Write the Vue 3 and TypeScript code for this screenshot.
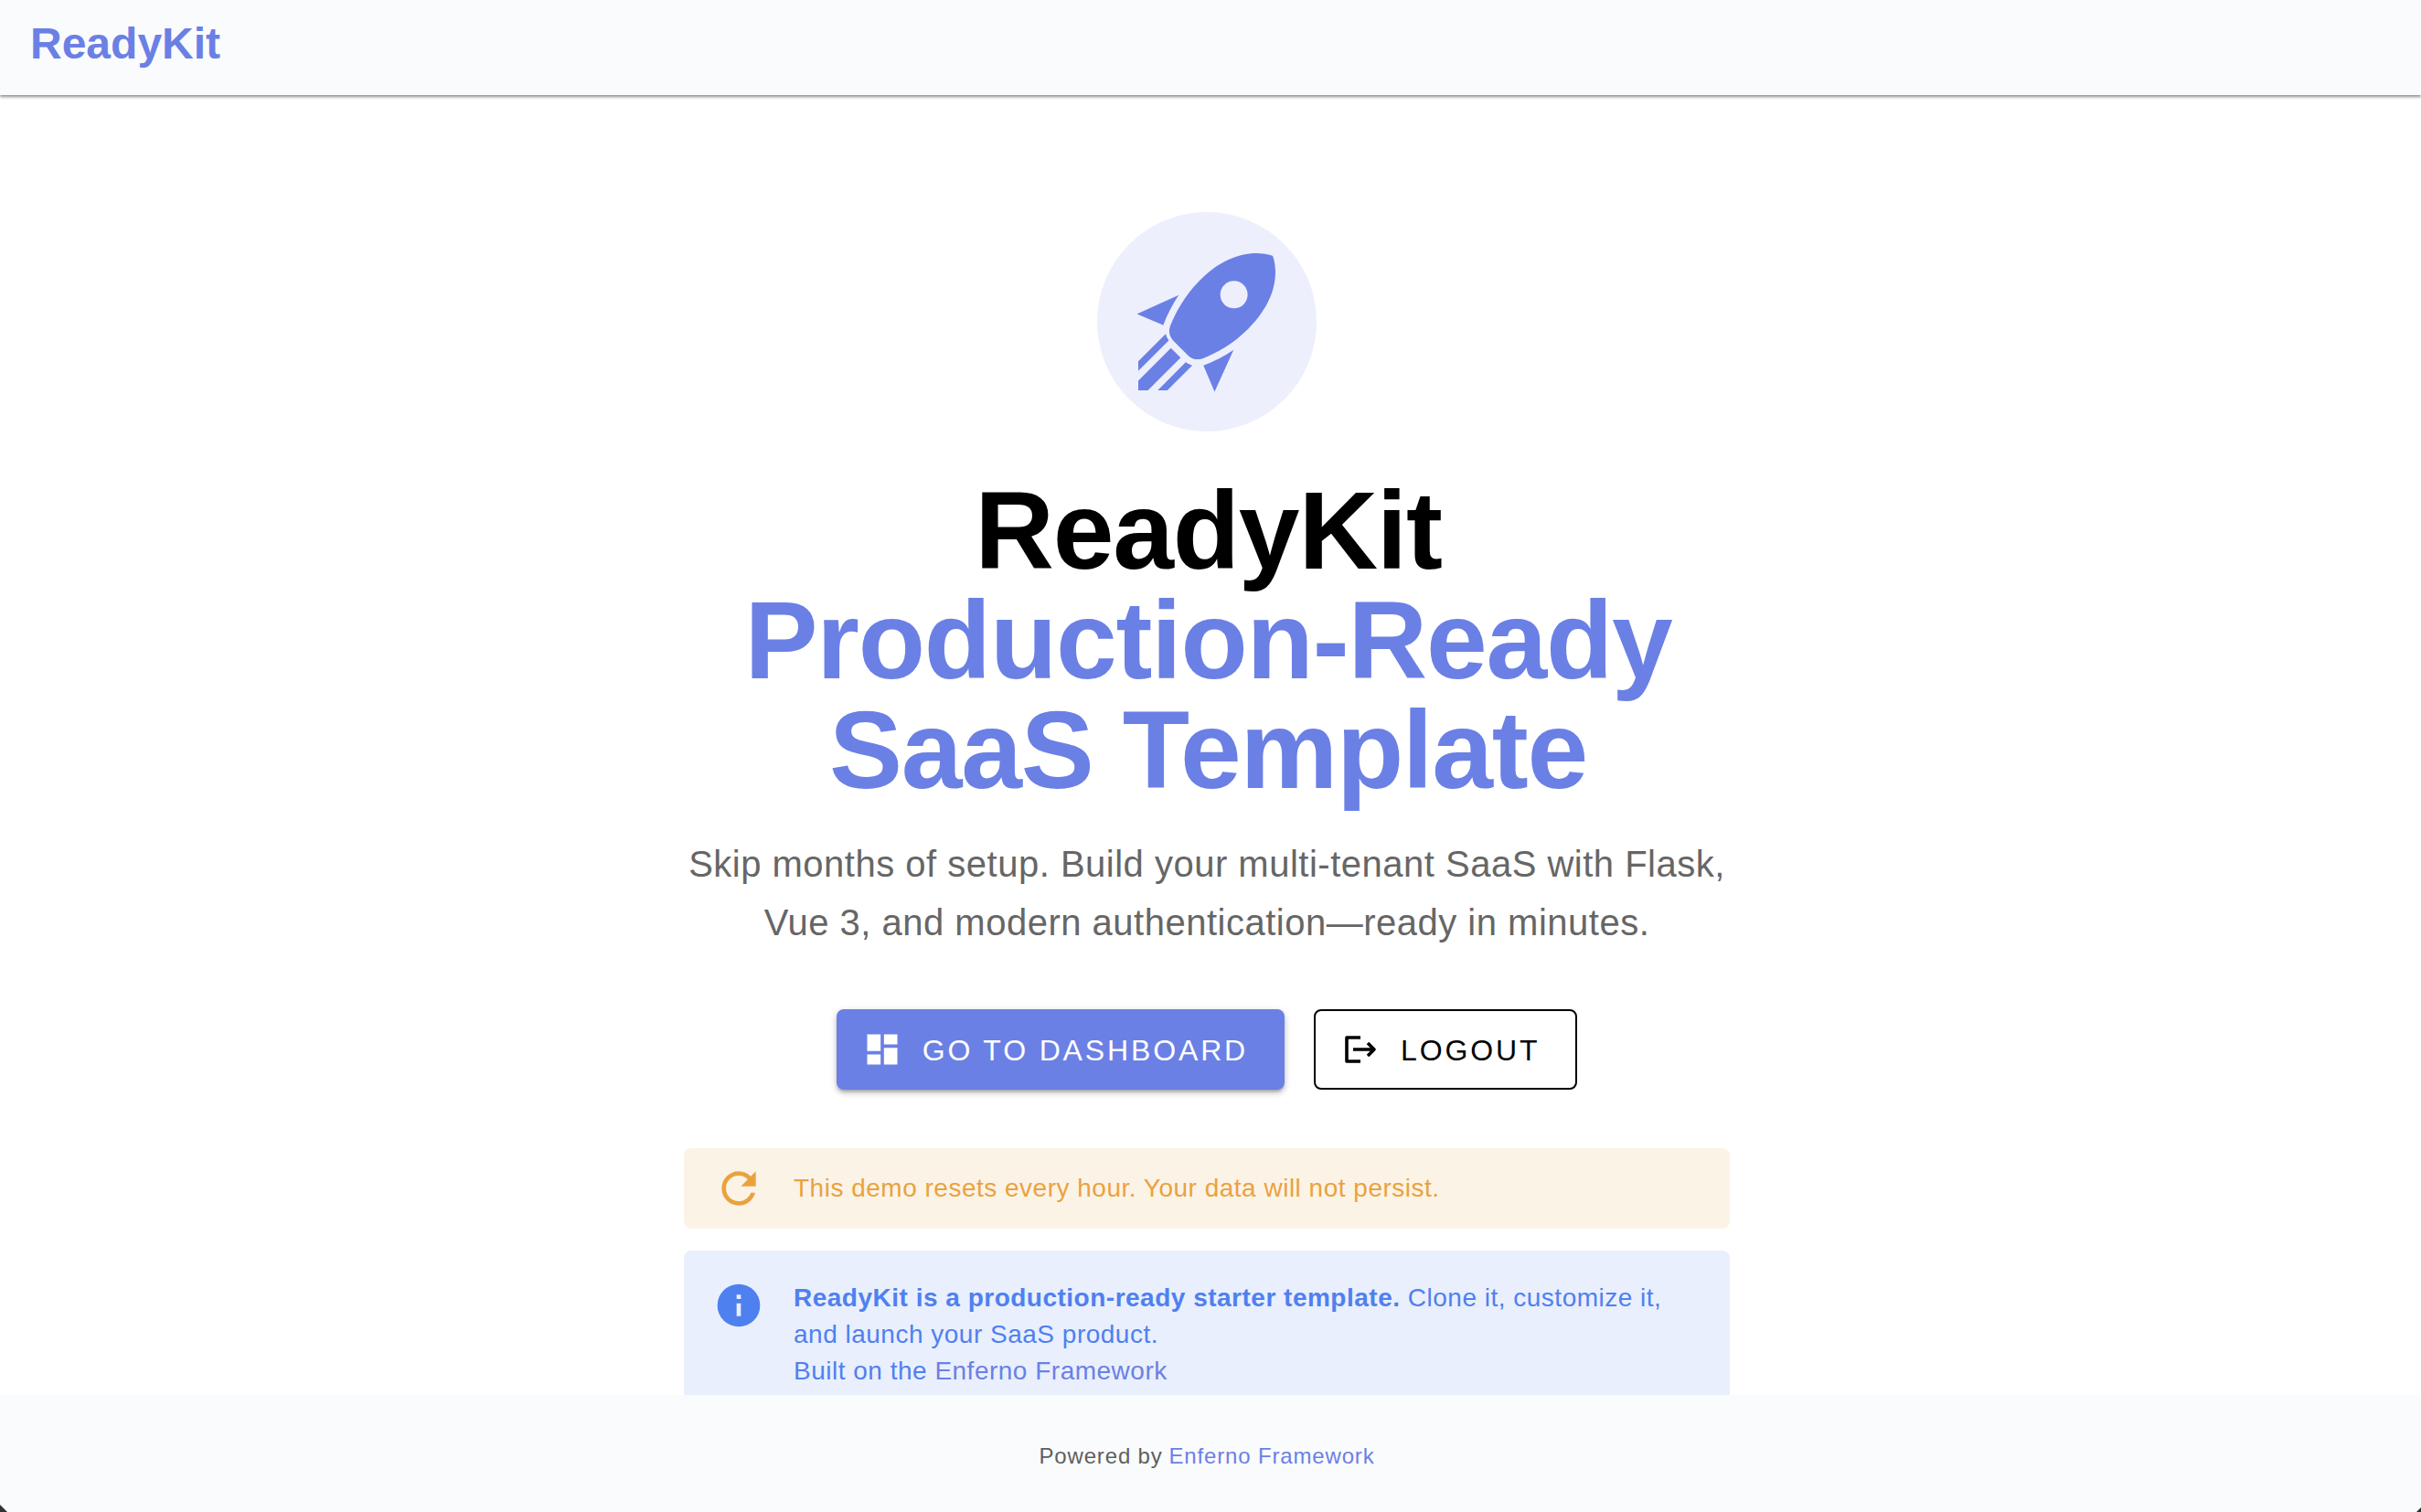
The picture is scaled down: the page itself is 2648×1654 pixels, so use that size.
<template>
  <div class="page">
    <header class="topbar">
      <a class="brand">ReadyKit</a>
    </header>

    <main class="main">
      <section class="hero">
        <div class="badge">
          <svg class="rocket" viewBox="0 0 24 24"><path :d="icons.rocket" /></svg>
        </div>

        <h1 class="title">
          <span>ReadyKit</span>
          <span class="accent">Production-Ready</span>
          <span class="accent">SaaS Template</span>
        </h1>

        <p class="lead">
          Skip months of setup. Build your multi-tenant SaaS with Flask,<br />
          Vue 3, and modern authentication—ready in minutes.
        </p>

        <div class="actions">
          <a class="btn primary">
            <svg class="btn-icon" viewBox="0 0 24 24"><path :d="icons.dashboard" /></svg>
            <span class="btn-label">Go to Dashboard</span>
          </a>
          <a class="btn outline">
            <svg class="btn-icon logout" viewBox="0 0 44 44">
              <path d="M23 9H8v26h15M15 22h23M31 15l7 7-7 7" />
            </svg>
            <span class="btn-label">Logout</span>
          </a>
        </div>

        <div class="alerts">
          <div class="alert warning">
            <svg class="alert-icon" viewBox="0 0 24 24"><path :d="icons.refresh" /></svg>
            <div>This demo resets every hour. Your data will not persist.</div>
          </div>
          <div class="alert info">
            <svg class="alert-icon" viewBox="0 0 24 24"><path :d="icons.info" /></svg>
            <div>
              <strong>ReadyKit is a production-ready starter template.</strong>
              Clone it, customize it,<br />
              and launch your SaaS product.<br />
              Built on the <a class="link">Enferno Framework</a>
            </div>
          </div>
        </div>
      </section>
    </main>

    <footer class="footer">
      Powered by <a class="footer-link">Enferno Framework</a>
    </footer>

    <i class="corner left"></i>
    <i class="corner right"></i>
  </div>
</template>

<script setup lang="ts">
const icons = {
  rocket:
    'M13.13 22.19L11.5 18.36C13.07 17.78 14.54 17 15.9 16.09L13.13 22.19M5.64 12.5L1.81 10.87L7.91 8.1C7 9.46 6.22 10.93 5.64 12.5M21.61 2.39C21.61 2.39 16.66 .269 11 5.93C8.81 8.12 7.5 10.53 6.65 12.64C6.37 13.39 6.56 14.21 7.11 14.77L9.24 16.89C9.79 17.45 10.61 17.63 11.36 17.35C13.5 16.53 15.88 15.19 18.07 13C23.73 7.34 21.61 2.39 21.61 2.39M14.54 9.46C13.76 8.68 13.76 7.41 14.54 6.63S16.59 5.85 17.37 6.63C18.14 7.41 18.15 8.68 17.37 9.46C16.59 10.24 15.32 10.24 14.54 9.46M8.88 16.53L7.47 15.12L8.88 16.53M6.24 22L9.88 18.36C9.54 18.27 9.21 18.12 8.91 17.91L4.83 22H6.24M2 22H3.41L8.18 17.24L6.76 15.83L2 20.59V22M2 19.17L6.45 14.72C6.24 14.42 6.09 14.1 6 13.75L2 17.76V19.17Z',
  dashboard: 'M13,3V9H21V3M13,21H21V11H13M3,21H11V15H3M3,13H11V3H3V13Z',
  refresh:
    'M17.65,6.35C16.2,4.9 14.21,4 12,4A8,8 0 0,0 4,12A8,8 0 0,0 12,20C15.73,20 18.84,17.45 19.73,14H17.65C16.83,16.33 14.61,18 12,18A6,6 0 0,1 6,12A6,6 0 0,1 12,6C13.66,6 15.14,6.69 16.22,7.78L13,11H20V4L17.65,6.35Z',
  info: 'M13,9H11V7H13M13,17H11V11H13M12,2A10,10 0 0,0 2,12A10,10 0 0,0 12,22A10,10 0 0,0 22,12A10,10 0 0,0 12,2Z'
};
</script>

<style>
html,
body {
  margin: 0;
  height: 100%;
  overflow: hidden;
  background: #fff;
}
</style>

<style scoped>
.page {
  position: relative;
  height: 100vh;
  display: flex;
  flex-direction: column;
  font-family: 'Liberation Sans', Arial, sans-serif;
  color: #000;
}

.topbar {
  flex: none;
  height: 104px;
  box-sizing: border-box;
  display: flex;
  align-items: center;
  padding: 0 0 10px 33px;
  background: #fafbfd;
  box-shadow: 0 2px 3px rgba(0, 0, 0, 0.45);
  z-index: 2;
}

.brand {
  font-size: 48px;
  font-weight: 700;
  color: #6b80e5;
}

.main {
  flex: 1;
  min-height: 0;
  overflow: hidden;
  padding: 128px 8px 0 0;
}

.hero {
  display: flex;
  flex-direction: column;
  align-items: center;
}

.badge {
  width: 240px;
  height: 240px;
  border-radius: 50%;
  background: #edeffc;
  display: grid;
  place-items: center;
  margin-bottom: 48px;
}

.rocket {
  width: 180px;
  height: 180px;
  fill: #6b80e5;
}

.title {
  margin: 0 0 33px;
  padding-left: 3px;
  font-size: 120px;
  line-height: 120px;
  font-weight: 700;
  letter-spacing: -1.2px;
  text-align: center;
}

.title span {
  display: block;
}

.accent {
  color: #6b80e5;
}

.lead {
  margin: 0 0 63px;
  font-size: 40px;
  line-height: 64px;
  letter-spacing: 0.5px;
  text-align: center;
  color: #666;
}

.actions {
  display: flex;
  gap: 32px;
  margin-bottom: 64px;
}

.btn {
  height: 88px;
  box-sizing: border-box;
  display: flex;
  align-items: center;
  gap: 22px;
  padding: 0 40px 0 28px;
  border-radius: 8px;
  font-size: 32px;
  letter-spacing: 2.857px;
  text-transform: uppercase;
}

.btn-label {
  margin-top: 3px;
}

.primary {
  background: #6b80e5;
  color: #fff;
  box-shadow: 0 3px 3px -1px rgba(0, 0, 0, 0.2), 0 4px 6px rgba(0, 0, 0, 0.14), 0 2px 10px rgba(0, 0, 0, 0.12);
}

.outline {
  gap: 23px;
  border: 2px solid #000;
  background: #fff;
  padding: 0 39px 0 26px;
}

.btn-icon {
  width: 44px;
  height: 44px;
  fill: currentColor;
}

.logout {
  fill: none;
  stroke: currentColor;
  stroke-width: 3.6;
  stroke-linejoin: round;
}

.alerts {
  width: 1144px;
  display: flex;
  flex-direction: column;
  gap: 24px;
}

.alert {
  display: flex;
  align-items: flex-start;
  gap: 32px;
  padding: 32px;
  border-radius: 8px;
  font-size: 28px;
  line-height: 40px;
  letter-spacing: 0.5px;
}

.alert-icon {
  flex: none;
  width: 56px;
  height: 56px;
  fill: currentColor;
}

.warning {
  align-items: center;
  height: 88px;
  box-sizing: border-box;
  padding-top: 0;
  padding-bottom: 0;
  background: #fcf3e7;
  color: #eaa23e;
}

.info {
  background: #e9effd;
  color: #4f80ef;
}

.link {
  color: #6b80e5;
}

.footer {
  flex: none;
  height: 128px;
  box-sizing: border-box;
  padding: 6px 8px 0 0;
  display: flex;
  align-items: center;
  justify-content: center;
  gap: 0.28em;
  background: #fafbfd;
  font-size: 24px;
  letter-spacing: 0.85px;
  color: #5f5f5f;
  z-index: 2;
}

.footer-link {
  color: #6b80e5;
}

.corner {
  position: absolute;
  bottom: 0;
  z-index: 3;
  background: #333;
}

.corner.left {
  left: 0;
  width: 8px;
  height: 8px;
  clip-path: polygon(0 0, 100% 100%, 0 100%);
}

.corner.right {
  right: 0;
  width: 5px;
  height: 5px;
  clip-path: polygon(100% 0, 100% 100%, 0 100%);
}
</style>
